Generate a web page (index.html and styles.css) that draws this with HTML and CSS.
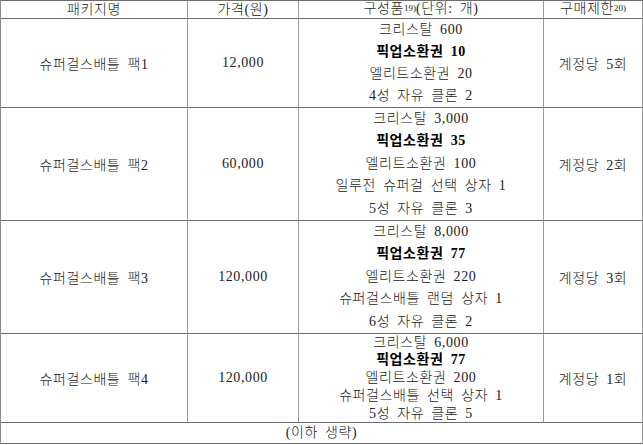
FILE: index.html
```html
<!DOCTYPE html>
<html lang="ko">
<head>
<meta charset="utf-8">
<title>패키지</title>
<link rel="stylesheet" href="styles.css">
</head>
<body>
<div class="sheet">
  <div class="cell head"><span>패키지명</span></div>
  <div class="cell head"><span>가격(원)</span></div>
  <div class="cell head"><span>구성품<span class="note">19)</span>(단위: 개)</span></div>
  <div class="cell head"><span>구매제한<span class="note">20)</span></span></div>

  <div class="cell">슈퍼걸스배틀 팩1</div>
  <div class="cell">12,000</div>
  <div class="cell list r1">
    <span>크리스탈 600</span>
    <b>픽업소환권 10</b>
    <span>엘리트소환권 20</span>
    <span>4성 자유 클론 2</span>
  </div>
  <div class="cell">계정당 5회</div>

  <div class="cell">슈퍼걸스배틀 팩2</div>
  <div class="cell">60,000</div>
  <div class="cell list r2">
    <span>크리스탈 3,000</span>
    <b>픽업소환권 35</b>
    <span>엘리트소환권 100</span>
    <span>일루전 슈퍼걸 선택 상자 1</span>
    <span>5성 자유 클론 3</span>
  </div>
  <div class="cell">계정당 2회</div>

  <div class="cell">슈퍼걸스배틀 팩3</div>
  <div class="cell">120,000</div>
  <div class="cell list r2">
    <span>크리스탈 8,000</span>
    <b>픽업소환권 77</b>
    <span>엘리트소환권 220</span>
    <span>슈퍼걸스배틀 랜덤 상자 1</span>
    <span>6성 자유 클론 2</span>
  </div>
  <div class="cell">계정당 3회</div>

  <div class="cell">슈퍼걸스배틀 팩4</div>
  <div class="cell">120,000</div>
  <div class="cell list r4">
    <span>크리스탈 6,000</span>
    <b>픽업소환권 77</b>
    <span>엘리트소환권 200</span>
    <span>슈퍼걸스배틀 선택 상자 1</span>
    <span>5성 자유 클론 5</span>
  </div>
  <div class="cell">계정당 1회</div>

  <div class="cell foot"><span>(이하 생략)</span></div>
</div>
</body>
</html>
```

FILE: styles.css
```css
html, body {
  margin: 0;
  padding: 0;
  background: #ffffff;
}

body {
  font-family: "Liberation Serif", "Noto Sans CJK KR", serif;
  font-size: 14px;
  color: #222222;
}

.sheet {
  display: grid;
  grid-template-columns: 187px 111px 245px 99px;
  grid-template-rows: 18px 89px 113px 113px 89px 21px;
  border-left: 1px solid #8c8c8c;
  border-top: 1px solid #6e6e6e;
  width: 642px;
}

.cell {
  box-sizing: border-box;
  border-right: 1px solid #9a9a9a;
  border-bottom: 1px solid #6e6e6e;
  display: flex;
  flex-direction: column;
  align-items: center;
  justify-content: center;
  text-align: center;
  white-space: nowrap;
  word-spacing: 3px;
  letter-spacing: 0.6px;
  font-weight: 300;
}

.head {
  line-height: 17px;
}

.note {
  font-size: 9px;
  letter-spacing: 0;
  position: relative;
  top: -2px;
}

.list span,
.list b {
  display: block;
}

.list b {
  font-weight: 700;
  color: #000;
}

.r1 { line-height: 22.25px; }
.r2 { line-height: 22.6px; }
.r4 { line-height: 17.8px; }

.foot {
  grid-column: 1 / -1;
  line-height: 20px;
}
```
